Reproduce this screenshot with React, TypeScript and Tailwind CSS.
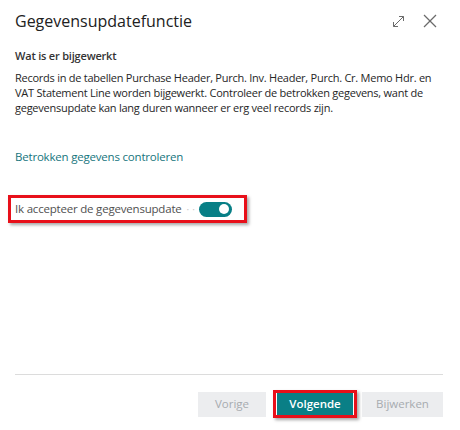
import React from "react";

export default function App() {
  return (
    <div
      className="w-[460px] h-[430px] bg-white flex flex-col text-[#262626] overflow-hidden"
      style={{ fontFamily: '"Open Sans", "Noto Sans", sans-serif' }}
    >
      {/* Header */}
      <div className="flex items-center justify-between pl-[15px] pr-[23px] pt-[9px] h-[33px]">
        <div className="text-[16px] leading-[24px] text-[#212121]">Gegevensupdatefunctie</div>
        <div className="flex items-center gap-[18px] text-[#6b6b6b]">
          <svg width="13" height="13" viewBox="0 0 13 13" fill="none" stroke="currentColor" strokeWidth="1">
            <path d="M1.5 11.5 L11.5 1.5" />
            <path d="M7 1.5 H11.5 V6" />
            <path d="M1.5 7 V11.5 H6" />
          </svg>
          <svg width="14" height="14" viewBox="0 0 14 14" fill="none" stroke="currentColor" strokeWidth="1.2">
            <path d="M1 1 L13 13" />
            <path d="M13 1 L1 13" />
          </svg>
        </div>
      </div>

      {/* Content */}
      <div className="pl-[15px] pr-[15px] mt-[15px]">
        <div className="text-[11px] leading-[16px] font-semibold text-[#333] tracking-[-0.2px]">Wat is er bijgewerkt</div>
        <div className="mt-[6px] text-[11px] leading-[15px] text-[#262626] whitespace-nowrap tracking-[-0.25px]">
          <div>Records in de tabellen Purchase Header, Purch. Inv. Header, Purch. Cr. Memo Hdr. en</div>
          <div>VAT Statement Line worden bijgewerkt. Controleer de betrokken gegevens, want de</div>
          <div>gegevensupdate kan lang duren wanneer er erg veel records zijn.</div>
        </div>
        <div className="mt-[34px] text-[11.5px] leading-[16px] text-[#16757d] tracking-[-0.2px]">Betrokken gegevens controleren</div>
      </div>

      {/* Toggle row with red highlight */}
      <div className="mt-[30px] pl-[8px]">
        <div className="w-[239px] h-[28px] border-[3px] border-[#e8101a] shadow-[2px_2px_3px_rgba(0,0,0,0.35)] flex items-center pl-[4px] whitespace-nowrap">
          <span className="text-[11.5px] leading-[16px] text-[#505050] tracking-[-0.2px]">Ik accepteer de gegevensupdate</span>
          <span className="ml-[5px] text-[10px] leading-[10px] text-[#c8c8c8] tracking-[3px]">··</span>
          <div className="ml-auto mr-[12px] w-[33px] h-[15px] rounded-full bg-[#087f86] flex items-center justify-end pr-[3px]">
            <div className="w-[10px] h-[10px] rounded-full bg-white" />
          </div>
        </div>
      </div>

      <div className="flex-1" />

      {/* Footer */}
      <div className="mx-[15px] h-px bg-[#dcdcdc] w-[428px]" />
      <div className="flex items-center justify-end pr-[17px] mt-[15px] mb-[12px] h-[28px]">
        <div className="w-[68px] h-[25px] bg-[#ecedef] flex items-center justify-center text-[11.5px] text-[#a7abb0]">Vorige</div>
        <div className="ml-[7px] w-[84px] h-[28px] border-[3px] border-[#e8101a] shadow-[2px_2px_3px_rgba(0,0,0,0.35)] flex items-center justify-center">
          <div className="w-[76px] h-[22px] bg-[#0a7f86] flex items-center justify-center text-[11.5px] font-semibold text-white">Volgende</div>
        </div>
        <div className="ml-[5px] w-[81px] h-[25px] bg-[#ecedef] flex items-center justify-center text-[11.5px] text-[#a7abb0]">Bijwerken</div>
      </div>
    </div>
  );
}
